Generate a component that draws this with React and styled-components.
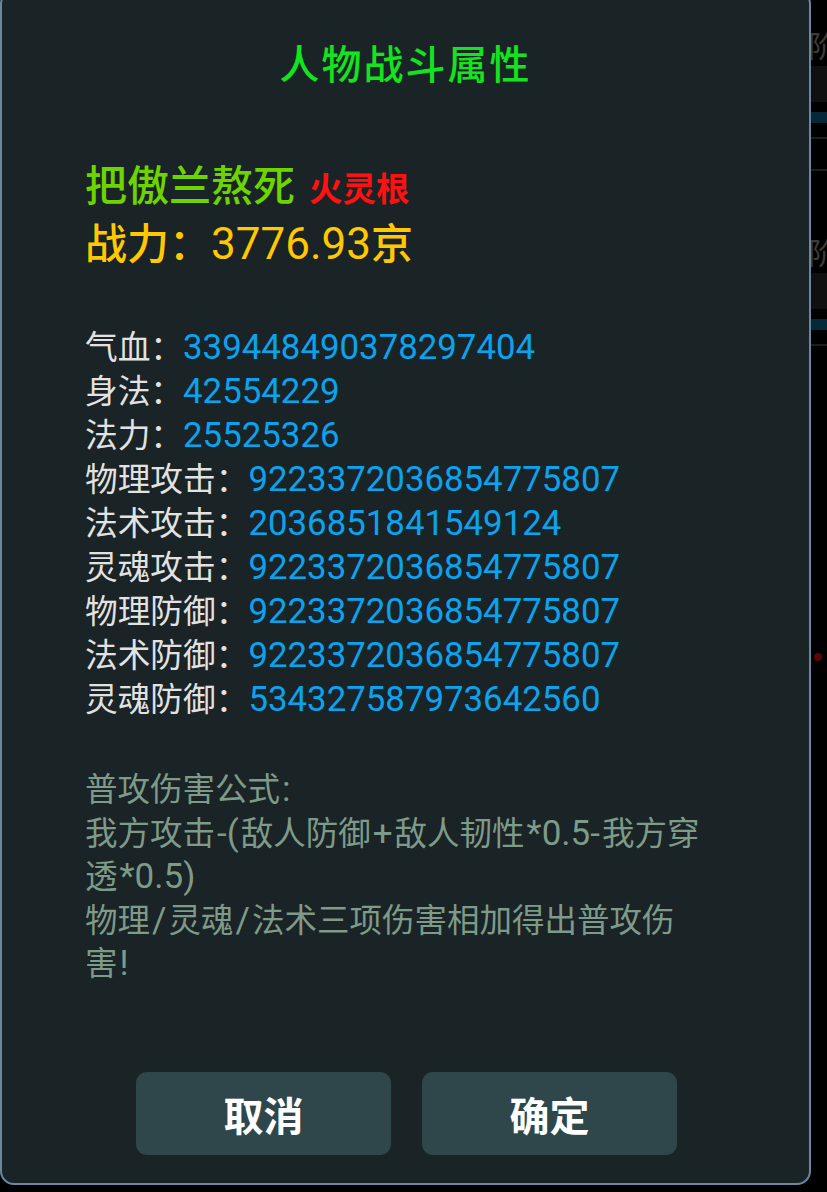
import React from "react";
import styled, { createGlobalStyle } from "styled-components";

const Global = createGlobalStyle`
  html, body { margin: 0; padding: 0; background: #000; }
  body { width: 827px; height: 1192px; overflow: hidden; font-family: "Noto Sans CJK SC", sans-serif; }
  #root { position: relative; width: 827px; height: 1192px; }
`;

const Page = styled.div`
  width: 827px;
  height: 1192px;
  background: #000;
  display: flex;
  flex-direction: column;
  align-items: flex-end;
  padding-top: 26px;
  box-sizing: border-box;
  gap: 2px;
`;

const BgCard = styled.div`
  width: 19px;
  display: flex;
  flex-direction: column;
  margin-bottom: ${(p) => p.$mb}px;
`;

const BgTitle = styled.div`
  height: 36px;
  font-size: 30px;
  line-height: 36px;
  color: #3b3b33;
  white-space: nowrap;
  overflow: hidden;
`;

const BgBar = styled.div`
  height: 36px;
  background: #101010;
  margin-top: 4px;
`;

const BgBlue = styled.div`
  height: 11px;
  background: #06293a;
  margin-top: 10px;
`;

const BgLine = styled.div`
  height: 2px;
  background: #1b1f22;
  margin-top: ${(p) => p.$mt}px;
`;

const RedDot = styled.div`
  position: absolute;
  left: 814px;
  top: 653px;
  width: 8px;
  height: 8px;
  border-radius: 50%;
  background: #5a0606;
`;

const Modal = styled.div`
  position: absolute;
  left: 0;
  top: -10px;
  width: 811px;
  height: 1195px;
  box-sizing: border-box;
  background: #1a2326;
  border: 2px solid #6a87a2;
  border-radius: 14px;
  display: flex;
  flex-direction: column;
  padding: 0 0 28px 83px;
`;

const Title = styled.div`
  margin-top: 42px;
  margin-left: -83px;
  text-align: center;
  font-size: 40px;
  line-height: 56px;
  font-weight: 500;
  color: #12e41e;
  letter-spacing: 2px;
`;

const Big = styled.div`
  font-size: 42px;
  line-height: 57px;
  font-weight: 500;
  color: ${(p) => p.$color};
  margin-top: ${(p) => p.$mt || 0}px;
  white-space: nowrap;
`;

const Tag = styled.span`
  font-size: 33.5px;
  font-weight: 700;
  color: #ff1111;
  margin-left: 14px;
`;

const Num = styled.span`
  font-family: Roboto, "Noto Sans CJK SC", sans-serif;
  font-size: ${(p) => p.$size}px;
  font-weight: 400;
  line-height: 1;
  margin: 0 ${(p) => p.$gap || 0}px;
`;

const Stats = styled.div`
  margin-top: 54px;
  display: flex;
  flex-direction: column;
`;

const StatRow = styled.div`
  height: 44px;
  line-height: 44px;
  font-size: 32.7px;
  color: #e2e2e2;
  white-space: nowrap;
`;

const StatValue = styled.span`
  font-family: Roboto, "Noto Sans CJK SC", sans-serif;
  font-size: 34.8px;
  line-height: 1;
  color: #0ba3ee;
`;

const Formula = styled.div`
  margin-top: 46px;
  width: 625px;
  font-size: 32.5px;
  line-height: 43.5px;
  color: #7e9a88;
`;

const Buttons = styled.div`
  margin-top: auto;
  margin-left: -83px;
  display: flex;
  justify-content: center;
  gap: 31px;
  padding-left: 2px;
`;

const Button = styled.button`
  width: 255px;
  height: 83px;
  border: none;
  border-radius: 11px;
  background: #2f474b;
  color: #fff;
  font-family: "Noto Sans CJK SC", sans-serif;
  font-size: 40px;
  font-weight: 700;
  cursor: pointer;
`;

const stats = [
  ["气血：", "339448490378297404"],
  ["身法：", "42554229"],
  ["法力：", "25525326"],
  ["物理攻击：", "9223372036854775807"],
  ["法术攻击：", "2036851841549124"],
  ["灵魂攻击：", "9223372036854775807"],
  ["物理防御：", "9223372036854775807"],
  ["法术防御：", "9223372036854775807"],
  ["灵魂防御：", "534327587973642560"],
];

const L = ({ children }) => (
  <Num $size={35} $gap={2}>
    {children}
  </Num>
);

export default function App() {
  return (
    <>
      <Global />
      <Page>
        <BgCard $mb={60}>
          <BgTitle>阶</BgTitle>
          <BgBar />
          <BgBlue />
          <BgLine $mt={14} />
          <BgLine $mt={30} />
        </BgCard>
        <BgCard $mb={0}>
          <BgTitle>阶</BgTitle>
          <BgBar />
          <BgBlue />
          <BgLine $mt={14} />
        </BgCard>
      </Page>
      <RedDot />
      <Modal>
        <Title>人物战斗属性</Title>
        <Big $color="#6dd400" $mt={64}>
          把傲兰熬死<Tag>火灵根</Tag>
        </Big>
        <Big $color="#ffc802" $mt={-3}>
          战力：<Num $size={44}>3776.93</Num>京
        </Big>
        <Stats>
          {stats.map(([k, v]) => (
            <StatRow key={k}>
              {k}
              <StatValue>{v}</StatValue>
            </StatRow>
          ))}
        </Stats>
        <Formula>
          普攻伤害公式<L>:</L>
          <br />
          我方攻击<L>-(</L>敌人防御<L>+</L>敌人韧性<L>*0.5-</L>我方穿透<L>*0.5)</L>
          <br />
          物理<L>/</L>灵魂<L>/</L>法术三项伤害相加得出普攻伤害<L>!</L>
        </Formula>
        <Buttons>
          <Button>取消</Button>
          <Button>确定</Button>
        </Buttons>
      </Modal>
    </>
  );
}
